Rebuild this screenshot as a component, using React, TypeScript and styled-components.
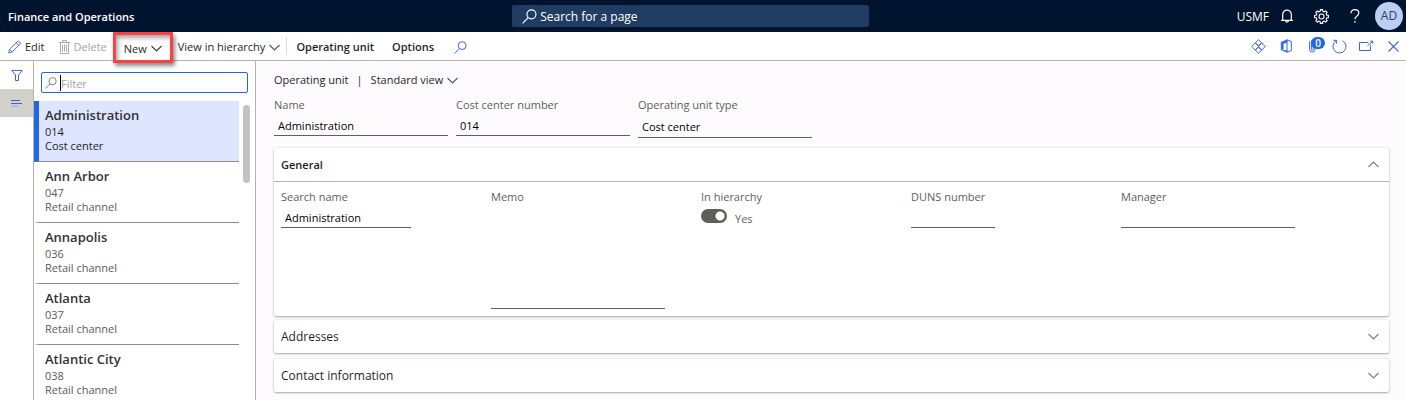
import React from "react";
import styled, { createGlobalStyle } from "styled-components";

const GlobalStyle = createGlobalStyle`
  *, *::before, *::after { box-sizing: border-box; }
  body {
    margin: 0;
    background: #fff;
    color: #1f1f1f;
    font: 11px/14px "Open Sans", "Noto Sans", sans-serif;
  }
  button, input, textarea { font: inherit; color: inherit; margin: 0; padding: 0; border: 0; background: none; outline: none; }
  ul, h1, h2, p { margin: 0; padding: 0; list-style: none; font-size: inherit; font-weight: inherit; }
  svg { display: block; flex: none; fill: none; }
`;

const BLUE = "#4164dc";

const Page = styled.div`
  height: 100vh;
  display: flex;
  flex-direction: column;
`;

const Header = styled.header`
  flex: none;
  height: 32px;
  padding: 0 3px 0 8px;
  display: grid;
  grid-template-columns: 17fr 357px 18fr;
  align-items: center;
  background: #00142f;
  color: #fff;
`;

const Brand = styled.h1`
  padding-top: 2px;
  font-size: 11px;
  font-weight: 600;
`;

const PageSearch = styled.label`
  height: 22px;
  padding: 0 10px;
  display: flex;
  align-items: center;
  gap: 3px;
  background: #213c62;
  border-radius: 2px;
`;

const PageSearchInput = styled.input`
  flex: 1;
  min-width: 0;
  padding-top: 2px;
  font-size: 12px;
  &::placeholder { color: #fff; opacity: 1; }
`;

const HeaderActions = styled.div`
  display: flex;
  align-items: center;
  justify-content: flex-end;
`;

const Company = styled.span`
  padding-top: 2px;
  font-size: 12px;
  margin-right: 10px;
`;

const HeaderButton = styled.button`
  width: 34px;
  height: 32px;
  display: grid;
  place-items: center;
  &:first-of-type { width: 16px; margin-right: 9px; }
`;

const Avatar = styled.button`
  width: 28px;
  height: 28px;
  margin-left: 3px;
  border-radius: 50%;
  background: #bccdf6;
  color: #33415f;
  font-size: 12px;
`;

const Toolbar = styled.nav`
  flex: none;
  height: 29px;
  padding: 0 7px 0 8px;
  display: flex;
  align-items: center;
  background: #fff;
  border-bottom: 1px solid #b2b2b4;
`;

const ToolButton = styled.button<{ $strong?: boolean; $space?: number }>`
  display: flex;
  align-items: center;
  gap: 4px;
  margin-right: ${(p) => p.$space ?? 16}px;
  padding-top: 2px;
  white-space: nowrap;
  line-height: 16px;
  font-weight: ${(p) => (p.$strong ? 600 : 400)};
  &:disabled { color: #a3a3a5; }
`;

const Highlight = styled.div`
  position: relative;
  z-index: 1;
  align-self: flex-start;
  flex: none;
  height: 31px;
  width: 60px;
  margin-right: 5px;
  display: flex;
  align-items: center;
  justify-content: center;
  border: 3px solid #fb4143;
  box-shadow: 2px 3px 4px rgba(0, 0, 0, 0.45), inset 2px 3px 4px rgba(0, 0, 0, 0.35);
`;

const Divider = styled.span`
  width: 1px;
  height: 18px;
  margin-right: 9px;
  background: #d8d8da;
`;

const ToolIcons = styled.div`
  margin-left: auto;
  display: flex;
`;

const IconButton = styled.button`
  position: relative;
  width: 27px;
  height: 28px;
  display: grid;
  place-items: center;
  &:last-child { margin-right: -8px; }
`;

const Badge = styled.span`
  position: absolute;
  top: 5px;
  left: 12px;
  width: 14px;
  height: 12px;
  border-radius: 6px;
  background: #2266e3;
  color: #fff;
  font-size: 10px;
  line-height: 12px;
  font-weight: 600;
  text-align: center;
`;

const Body = styled.div`
  flex: 1;
  min-height: 0;
  display: flex;
`;

const Rail = styled.aside`
  flex: none;
  width: 34px;
  border-right: 1px solid #b2b2b4;
`;

const RailButton = styled.button<{ $active?: boolean }>`
  width: 100%;
  height: 28px;
  display: grid;
  place-items: center;
  background: ${(p) => (p.$active ? "#d4d1cd" : "transparent")};
`;

const ListPane = styled.section`
  flex: none;
  width: 222px;
  padding-top: 11px;
  display: flex;
  flex-direction: column;
  border-right: 1px solid #b2b2b4;
`;

const Filter = styled.label`
  flex: none;
  height: 21px;
  margin: 0 7px 8px;
  padding: 0 3px;
  display: flex;
  align-items: center;
  border: 1px solid #2266e3;
  border-radius: 2px;
`;

const Caret = styled.span`
  width: 1px;
  height: 16px;
  margin-left: 3px;
  background: #000;
`;

const FilterInput = styled.input`
  flex: 1;
  min-width: 0;
  line-height: 16px;
  padding-top: 2px;
  &::placeholder { color: #a3a3a5; opacity: 1; }
`;

const ListArea = styled.div`
  flex: 1;
  min-height: 0;
  display: flex;
  overflow: hidden;
`;

const Units = styled.ul`
  flex: 1;
`;

const Unit = styled.button<{ $active?: boolean }>`
  width: 100%;
  height: 61px;
  padding: 5px 0 0 6px;
  display: flex;
  flex-direction: column;
  text-align: left;
  color: ${(p) => (p.$active ? "#1f1f1f" : "#5a5a5c")};
  background: ${(p) => (p.$active ? "#dee5ff" : "transparent")};
  border-bottom: 1px solid #8b8b8d;
  border-left: 5px solid ${(p) => (p.$active ? "#2266e3" : "transparent")};
`;

const UnitName = styled.span`
  font-size: 13px;
  line-height: 19px;
  font-weight: 600;
  color: #323234;
`;

const ScrollTrack = styled.div`
  flex: none;
  width: 16px;
  padding: 4px 5px 0 4px;
`;

const ScrollThumb = styled.div`
  height: 78px;
  border-radius: 4px;
  background: #c3c2c6;
`;

const Main = styled.main`
  flex: 1;
  min-width: 0;
  padding: 12px 17px 0 18px;
  background: #fefbff;
`;

const ViewBar = styled.div`
  display: flex;
  align-items: center;
  height: 14px;
`;

const ViewButton = styled.button`
  display: flex;
  align-items: center;
  gap: 4px;
`;

const Pipe = styled.span`
  margin: 0 8px;
`;

const HeaderFields = styled.div`
  display: flex;
  gap: 8px;
  margin-top: 11px;
  height: 50px;
`;

const Field = styled.div`
  display: flex;
  flex-direction: column;
  align-items: flex-start;
`;

const Label = styled.label`
  color: #605e5c;
  white-space: nowrap;
`;

const TextInput = styled.input<{ $width: number; $tall?: boolean }>`
  width: ${(p) => p.$width}px;
  height: ${(p) => (p.$tall ? 26 : 24)}px;
  padding: 4px 0 0 4px;
  color: #000;
  border-bottom: 1px solid #605e5c;
`;

const Memo = styled.textarea`
  width: 174px;
  height: 105px;
  padding: 4px;
  resize: none;
  border-bottom: 1px solid #605e5c;
`;

const Card = styled.section<{ $space?: number }>`
  margin-bottom: ${(p) => p.$space ?? 6}px;
  background: #fff;
  border-radius: 2px;
  box-shadow: 0 1px 2px rgba(0, 0, 0, 0.3), 0 0 3px rgba(0, 0, 0, 0.1);
`;

const CardHeader = styled.button<{ $open?: boolean }>`
  width: 100%;
  height: ${(p) => (p.$open ? 34 : 33)}px;
  padding: 0 10px 0 7px;
  display: flex;
  align-items: center;
  justify-content: space-between;
  font-size: ${(p) => (p.$open ? 11 : 12)}px;
  font-weight: ${(p) => (p.$open ? 600 : 500)};
  border-bottom: ${(p) => (p.$open ? "1px solid #b2b2b4" : "0")};
`;

const CardBody = styled.div`
  padding: 8px 7px 7px;
  display: grid;
  grid-template-columns: repeat(auto-fill, 210px);
`;

const ToggleRow = styled.div`
  display: flex;
  align-items: center;
  gap: 8px;
  color: #605e5c;
  margin-top: 1px;
  line-height: 16px;
`;

const Toggle = styled.input`
  appearance: none;
  flex: none;
  width: 26px;
  height: 14px;
  border-radius: 7px;
  background: radial-gradient(circle at 19px 7px, #fff 4px, #605e5c 5px);
`;

const ToggleValue = styled.span`
  padding-top: 6px;
`;

const Chevron = ({ up = false, color = "#3d434e" }: { up?: boolean; color?: string }) => (
  <svg width="11" height="7" viewBox="0 0 11 7" stroke={color} strokeWidth="1.2" aria-hidden="true">
    <path d={up ? "M.5 6l5-5 5 5" : "M.5 1l5 5 5-5"} />
  </svg>
);

const Magnifier = ({ color, size = 13 }: { color: string; size?: number }) => (
  <svg width={size} height={size} viewBox="0 0 13 13" stroke={color} aria-hidden="true">
    <circle cx="8.2" cy="4.6" r="3.9" />
    <path d="M5.4 7.5L.5 12.5" />
  </svg>
);

const Pencil = () => (
  <svg width="13" height="14" viewBox="0 0 14 14" stroke="#3f62d8" aria-hidden="true">
    <path d="M.7 13.3l1-3.9L9.9 1.3q1.3-1.2 2.5 0l.3.3q1.2 1.2 0 2.5L4.6 12.3zM8.8 2.4l2.8 2.8M1.7 9.4l2.9 2.9" />
  </svg>
);

const Trash = () => (
  <svg width="11" height="14" viewBox="0 0 11 14" stroke="#a9a9ab" aria-hidden="true">
    <path d="M0 2.5h11M3.5 2.5v-2h4v2M1.5 2.5v11h8v-11" />
    <path d="M3.5 4.5v7M5.5 4.5v7M7.5 4.5v7" />
  </svg>
);

const Bell = () => (
  <svg width="14" height="14" viewBox="0 0 14 14" stroke="#fff" strokeWidth="1.2" aria-hidden="true">
    <path d="M1 11.4h12M2.7 11.2V5.4a4.3 4.3 0 0 1 8.6 0v5.8M5.5 11.6a1.5 1.5 0 0 0 3 0" />
  </svg>
);

// Eight teeth, each with a flat tip joined to the next by a shallow valley.
const gearPoints = Array.from({ length: 8 }, (_, tooth) =>
  [
    [-13, 5.4],
    [-10, 7],
    [10, 7],
    [13, 5.4],
  ].map(([offset, radius]) => {
    const angle = ((tooth * 45 + offset) * Math.PI) / 180;
    return `${(7.5 + radius * Math.cos(angle)).toFixed(2)},${(7.5 + radius * Math.sin(angle)).toFixed(2)}`;
  }).join(" ")
).join(" ");

const Gear = () => (
  <svg width="15" height="15" viewBox="0 0 15 15" stroke="#fff" strokeWidth="1.1" aria-hidden="true">
    <polygon points={gearPoints} strokeLinejoin="round" />
    <circle cx="7.5" cy="7.5" r="2.5" />
  </svg>
);

const Help = () => (
  <svg width="10" height="14" viewBox="0 0 10 14" stroke="#fff" strokeWidth="1.2" aria-hidden="true">
    <path d="M1 4.3Q1 .7 4.9.7T8.8 4.1Q8.8 5.8 6.8 7.2T4.9 10.3M4.9 12v1.7" />
  </svg>
);

const Diamonds = () => (
  <svg width="15" height="15" viewBox="0 0 15 15" stroke={BLUE} aria-hidden="true">
    <path d="M4.4 3.8L7.5.8l3.1 3-3.1 3.1zM4.4 11.2l3.1 3 3.1-3-3.1-3.1zM4.4 3.8L.8 7.5l3.6 3.7M10.6 3.8l3.6 3.7-3.6 3.7M4.4 3.8l3.1 3.7-3.1 3.7M10.6 3.8L7.5 7.5l3.1 3.7" />
  </svg>
);

const Office = () => (
  <svg width="12" height="14" viewBox="0 0 12 14" stroke={BLUE} aria-hidden="true">
    <path d="M7 .8l4.3 1.6v9.2L7 13.2z" />
    <path d="M7 .8L1.2 3.3v7.5l2-.9V4.4L7 3.2zM1.2 10.8L7 13.2v-1.4l-3.8-.7" fill="#2266e3" stroke="#2266e3" strokeWidth=".6" />
  </svg>
);

const Clip = () => (
  <svg width="7" height="14" viewBox="0 0 7 14" stroke={BLUE} aria-hidden="true">
    <path d="M.6 2.5v7.7q0 3 2.7 3t2.7-3V3q0-2.2-1.8-2.2T2.4 3v6.8q0 1.2.9 1.2t.9-1.2V4" />
  </svg>
);

const Refresh = () => (
  <svg width="15" height="15" viewBox="0 0 15 15" stroke={BLUE} aria-hidden="true">
    <path d="M4.4 1.8a6.5 6.5 0 1 0 6.2 0M1.2 1.3h3.4v3.4" />
  </svg>
);

const Popout = () => (
  <svg width="15" height="12" viewBox="0 0 15 12" stroke={BLUE} aria-hidden="true">
    <path d="M9.5 2.5h-9v8h11V5.5M8.5 5.8l5-4M10.8 1.2h3v2.6" />
  </svg>
);

const Close = () => (
  <svg width="11" height="11" viewBox="0 0 11 11" stroke={BLUE} strokeWidth="1.1" aria-hidden="true">
    <path d="M.5.5l10 10M10.5.5l-10 10" />
  </svg>
);

const Funnel = () => (
  <svg width="12" height="11" viewBox="0 0 12 11" stroke={BLUE} aria-hidden="true">
    <path d="M.8.5h10.4L7.5 5v5.5h-3V5z" />
  </svg>
);

const Lines = () => (
  <svg width="11" height="7" viewBox="0 0 11 7" aria-hidden="true">
    <path d="M0 .5h9M0 3.5h11" stroke={BLUE} />
    <path d="M0 6h7" stroke="#9aa9e0" />
  </svg>
);

const units = [
  { name: "Administration", number: "014", type: "Cost center" },
  { name: "Ann Arbor", number: "047", type: "Retail channel" },
  { name: "Annapolis", number: "036", type: "Retail channel" },
  { name: "Atlanta", number: "037", type: "Retail channel" },
  { name: "Atlantic City", number: "038", type: "Retail channel" },
];

export default function App() {
  return (
    <Page>
      <GlobalStyle />
      <Header>
        <Brand>Finance and Operations</Brand>
        <PageSearch>
          <Magnifier color="#fff" size={15} />
          <PageSearchInput placeholder="Search for a page" aria-label="Search for a page" />
        </PageSearch>
        <HeaderActions>
          <Company>USMF</Company>
          <HeaderButton aria-label="Notifications"><Bell /></HeaderButton>
          <HeaderButton aria-label="Settings"><Gear /></HeaderButton>
          <HeaderButton aria-label="Help"><Help /></HeaderButton>
          <Avatar>AD</Avatar>
        </HeaderActions>
      </Header>
      <Toolbar>
        <ToolButton $space={14}><Pencil />Edit</ToolButton>
        <ToolButton disabled $space={6}><Trash />Delete</ToolButton>
        <Highlight>
          <ToolButton $space={0}>New<Chevron /></ToolButton>
        </Highlight>
        <ToolButton $space={6}>View in hierarchy<Chevron color="#3f5a9a" /></ToolButton>
        <Divider />
        <ToolButton $strong $space={18}>Operating unit</ToolButton>
        <ToolButton $strong $space={20}>Options</ToolButton>
        <ToolButton aria-label="Search actions"><Magnifier color={BLUE} /></ToolButton>
        <ToolIcons>
          <IconButton aria-label="Power Apps"><Diamonds /></IconButton>
          <IconButton aria-label="Open in Office"><Office /></IconButton>
          <IconButton aria-label="Attachments"><Clip /><Badge>0</Badge></IconButton>
          <IconButton aria-label="Refresh"><Refresh /></IconButton>
          <IconButton aria-label="Open in new window"><Popout /></IconButton>
          <IconButton aria-label="Close"><Close /></IconButton>
        </ToolIcons>
      </Toolbar>
      <Body>
        <Rail>
          <RailButton aria-label="Show filters"><Funnel /></RailButton>
          <RailButton $active aria-label="Show list"><Lines /></RailButton>
        </Rail>
        <ListPane>
          <Filter>
            <Magnifier color="#77777a" size={12} />
            <Caret />
            <FilterInput placeholder="Filter" aria-label="Filter" />
          </Filter>
          <ListArea>
            <Units>
              {units.map((unit, index) => (
                <li key={unit.number}>
                  <Unit $active={index === 0}>
                    <UnitName>{unit.name}</UnitName>
                    <span>{unit.number}</span>
                    <span>{unit.type}</span>
                  </Unit>
                </li>
              ))}
            </Units>
            <ScrollTrack><ScrollThumb /></ScrollTrack>
          </ListArea>
        </ListPane>
        <Main>
          <ViewBar>
            <span>Operating unit</span>
            <Pipe>|</Pipe>
            <ViewButton>Standard view<Chevron color="#3f5a9a" /></ViewButton>
          </ViewBar>
          <HeaderFields>
            <Field>
              <Label htmlFor="name">Name</Label>
              <TextInput id="name" $width={174} defaultValue="Administration" />
            </Field>
            <Field>
              <Label htmlFor="number">Cost center number</Label>
              <TextInput id="number" $width={174} defaultValue="014" />
            </Field>
            <Field>
              <Label htmlFor="type">Operating unit type</Label>
              <TextInput id="type" $width={174} $tall defaultValue="Cost center" />
            </Field>
          </HeaderFields>
          <Card $space={4}>
            <CardHeader $open aria-expanded="true">General<Chevron up color="#7c828c" /></CardHeader>
            <CardBody>
              <Field>
                <Label htmlFor="search-name">Search name</Label>
                <TextInput id="search-name" $width={130} defaultValue="Administration" />
              </Field>
              <Field>
                <Label htmlFor="memo">Memo</Label>
                <Memo id="memo" />
              </Field>
              <Field>
                <Label htmlFor="in-hierarchy">In hierarchy</Label>
                <ToggleRow>
                  <Toggle id="in-hierarchy" type="checkbox" role="switch" defaultChecked />
                  <ToggleValue>Yes</ToggleValue>
                </ToggleRow>
              </Field>
              <Field>
                <Label htmlFor="duns">DUNS number</Label>
                <TextInput id="duns" $width={84} />
              </Field>
              <Field>
                <Label htmlFor="manager">Manager</Label>
                <TextInput id="manager" $width={174} />
              </Field>
            </CardBody>
          </Card>
          <Card>
            <CardHeader aria-expanded="false">Addresses<Chevron color="#7c828c" /></CardHeader>
          </Card>
          <Card>
            <CardHeader aria-expanded="false">Contact information<Chevron color="#7c828c" /></CardHeader>
          </Card>
        </Main>
      </Body>
    </Page>
  );
}
